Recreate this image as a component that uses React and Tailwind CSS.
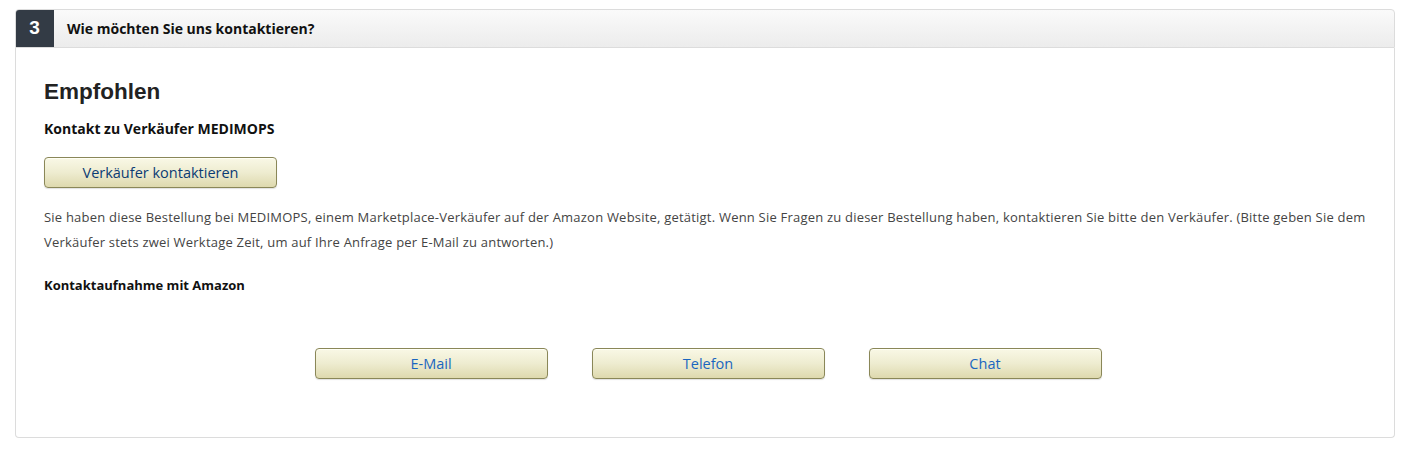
export default function App() {
  const font = { fontFamily: '"Open Sans", "Noto Sans", Arial, sans-serif' }

  return (
    <div className="min-h-[453px] bg-white px-[15px] pt-[9px] text-[13px] text-[#333]" style={font}>
      <div className="w-[1380px]">
        <div className="flex h-[39px] items-stretch overflow-hidden rounded-t-[4px] border border-[#dcdcdc] bg-gradient-to-b from-[#fafafa] to-[#ececec]">
          <div className="-my-px -ml-px flex w-[39px] items-center justify-center rounded-tl-[4px] bg-[#333b45] text-[19px] font-bold text-white" style={{ fontFamily: 'Arial, "Liberation Sans", sans-serif' }}>
            3
          </div>
          <div className="flex items-center pl-[13px] text-[14px] font-bold text-[#111]">
            Wie möchten Sie uns kontaktieren?
          </div>
        </div>

        <div className="h-[390px] rounded-b-[4px] border border-t-0 border-[#dcdcdc] px-[28px] pt-[30px]">
          <h2 className="text-[22.5px] font-bold leading-[28px] text-[#222]" style={{ fontFamily: '"Liberation Sans", Arial, sans-serif' }}>
            Empfohlen
          </h2>
          <p className="mt-[13px] text-[14px] font-bold leading-[20px] text-[#111]">Kontakt zu Verkäufer MEDIMOPS</p>

          <button className="mt-[18px] flex h-[31px] w-[233px] items-center justify-center rounded-[4px] border border-[#8a8758] bg-gradient-to-b from-[#f9f8e6] via-[#eeecd0] to-[#ded9ae] text-[14.5px] text-[#0b3b73] shadow-[inset_0_1px_0_#fffff5,0_1px_1px_rgba(0,0,0,0.12)]">
            Verkäufer kontaktieren
          </button>

          <p className="mt-[17px] text-[13px] leading-[25px] tracking-[0.21px] text-[#444]">
            Sie haben diese Bestellung bei MEDIMOPS, einem Marketplace-Verkäufer auf der Amazon Website, getätigt. Wenn Sie Fragen zu dieser Bestellung haben, kontaktieren Sie bitte den Verkäufer. (Bitte geben Sie dem Verkäufer stets zwei Werktage Zeit, um auf Ihre Anfrage per E-Mail zu antworten.)
          </p>

          <p className="mt-[20px] font-bold leading-[20px] text-[#111]">Kontaktaufnahme mit Amazon</p>

          <div className="mt-[53px] flex justify-center gap-[44px] pl-[6px]">
            {['E-Mail', 'Telefon', 'Chat'].map((label) => (
              <button
                key={label}
                className="flex h-[31px] w-[233px] items-center justify-center rounded-[4px] border border-[#8a8758] bg-gradient-to-b from-[#f9f8e6] via-[#eeecd0] to-[#ded9ae] text-[14.5px] text-[#1a66c0] shadow-[inset_0_1px_0_#fffff5,0_1px_1px_rgba(0,0,0,0.12)]"
              >
                {label}
              </button>
            ))}
          </div>
        </div>
      </div>
    </div>
  )
}
